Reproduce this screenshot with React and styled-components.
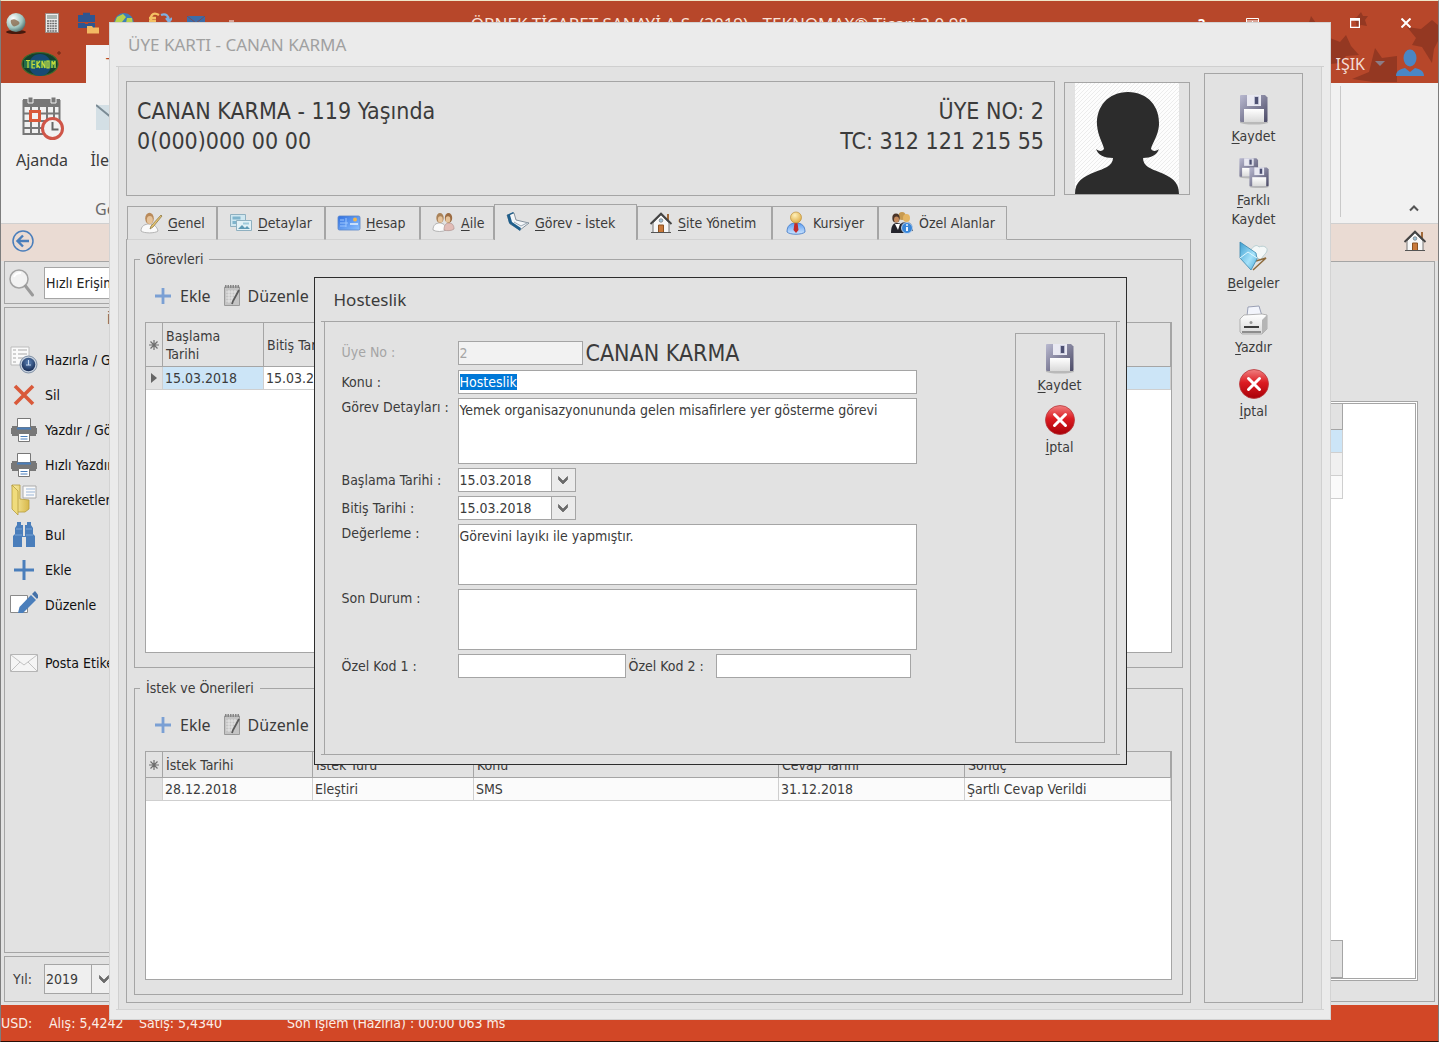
import React, { useEffect, useRef } from "react";
import styled, { createGlobalStyle } from "styled-components";

const ui = '"DejaVu Sans Condensed", "Noto Sans", sans-serif';
const titleFont = '"Noto Sans", "Open Sans", sans-serif';
const line = "#a5a5a5";
const face = "#e2e2e2";
const ink = "#3b3b3b";
const accent = "#b7472a";
const blue = "#4a7ebb";

const Global = createGlobalStyle`
  *, *::before, *::after { box-sizing: border-box; }
  body { margin: 0; font-family: ${ui}; font-size: 14px; color: ${ink}; }
  button, input, textarea, select { font-family: inherit; font-size: inherit; color: inherit; }
  svg { display: block; flex: none; }
`;

/* ---------- shared icons ---------- */

const Svg = ({ s = 24, w, h, vb, children, ...rest }) => (
  <svg width={w || s} height={h || s} viewBox={vb || `0 0 ${w || s} ${h || s}`} fill="none" aria-hidden="true" {...rest}>
    {children}
  </svg>
);

const HiddenDefs = styled.svg`position: absolute;`;

const Defs = () => (
  <HiddenDefs width="0" height="0" aria-hidden="true">
    <defs>
      <linearGradient id="disk" x1="0" y1="0" x2="1" y2="1">
        <stop offset="0" stopColor="#b9b9d0" />
        <stop offset="1" stopColor="#4b4a66" />
      </linearGradient>
      <linearGradient id="paper" x1="0" y1="0" x2="0" y2="1">
        <stop offset="0" stopColor="#ffffff" />
        <stop offset="1" stopColor="#d9d9d9" />
      </linearGradient>
      <linearGradient id="red" x1="0" y1="0" x2="0" y2="1">
        <stop offset="0" stopColor="#f08080" />
        <stop offset="0.45" stopColor="#dc1c22" />
        <stop offset="1" stopColor="#a80008" />
      </linearGradient>
      <linearGradient id="sky" x1="0" y1="0" x2="1" y2="1">
        <stop offset="0" stopColor="#3f9fd0" />
        <stop offset="0.6" stopColor="#a5e2fa" />
        <stop offset="1" stopColor="#4aa8d6" />
      </linearGradient>
      <linearGradient id="card" x1="0" y1="0" x2="1" y2="1">
        <stop offset="0" stopColor="#2f6fe0" />
        <stop offset="1" stopColor="#8fc3ff" />
      </linearGradient>
      <linearGradient id="gold" x1="0" y1="0" x2="1" y2="0">
        <stop offset="0" stopColor="#fbf0a8" />
        <stop offset="1" stopColor="#d8b84a" />
      </linearGradient>
      <radialGradient id="skin" cx="0.4" cy="0.3" r="0.8">
        <stop offset="0" stopColor="#fff0b8" />
        <stop offset="1" stopColor="#dba53a" />
      </radialGradient>
      <linearGradient id="bluebody" x1="0" y1="0" x2="0" y2="1">
        <stop offset="0" stopColor="#5a9cf0" />
        <stop offset="1" stopColor="#cfe6ff" />
      </linearGradient>
      <radialGradient id="orb" cx="0.35" cy="0.3" r="0.8">
        <stop offset="0" stopColor="#ffffff" />
        <stop offset="0.6" stopColor="#9fc4bd" />
        <stop offset="1" stopColor="#3c5a58" />
      </radialGradient>
      <radialGradient id="dial" cx="0.5" cy="0.35" r="0.7">
        <stop offset="0" stopColor="#5b83b8" />
        <stop offset="1" stopColor="#10234a" />
      </radialGradient>
      <pattern id="hatch" width="4" height="4" patternUnits="userSpaceOnUse">
        <rect width="4" height="4" fill="#fdfdfd" />
        <path d="M-1 5L5 -1M-1 1L1 -1M3 5L5 3" stroke="#ececec" strokeWidth="1" />
      </pattern>
    </defs>
  </HiddenDefs>
);

const DiskShape = () => (
  <>
    <ellipse cx="16" cy="29.500" rx="14" ry="2" fill="#000" opacity="0.18" />
    <path d="M3 2h24l2.500 2.500V28a1 1 0 0 1-1 1H3a1 1 0 0 1-1-1V3a1 1 0 0 1 1-1z" fill="url(#disk)" />
    <path d="M9 2h14v11H9z" fill="#e9e9f2" />
    <path d="M16 3.500h5v8h-5z" fill="#b7b9ce" />
    <path d="M17 4h3v7h-3z" fill="#4d5072" />
    <path d="M6 16h20v13H6z" fill="url(#paper)" />
  </>
);
const Disk = () => <Svg s={32}><DiskShape /></Svg>;
const Disks = () => (
  <Svg s={32}>
    <g transform="scale(.68)"><DiskShape /></g>
    <g transform="translate(10 9) scale(.7)"><DiskShape /></g>
  </Svg>
);
const Cancel = () => (
  <Svg s={32}>
    <circle cx="16" cy="16" r="14.500" fill="url(#red)" stroke="#b8383c" strokeWidth=".8" />
    <path d="M10.500 10.500l11 11M21.500 10.500l-11 11" stroke="#fff" strokeWidth="3" strokeLinecap="round" />
  </Svg>
);
const Docs = () => (
  <Svg s={32}>
    <path d="M13 10c2-4 6-6 8-3 4-2 9 0 8 4-1 3-4 4-6 9L13 14z" fill="#f4f8f8" stroke="#b9cfd2" />
    <path d="M18 21l10-3-13 12" stroke="#8c6a3c" strokeWidth="1.500" />
    <path d="M2 2l16 11 1 6-6 11L2 18z" fill="url(#sky)" stroke="#3a87ad" strokeWidth=".8" />
    <path d="M2 18l8-6 9 6" stroke="#e2f7ff" />
  </Svg>
);
const Printer3D = () => (
  <Svg s={32}>
    <path d="M10 3l11-1 3 10H9z" fill="#f2f4fb" stroke="#9aa0b5" />
    <path d="M2 15l4-4 18-1 5 1v14l-5 5H4l-2-2z" fill="url(#paper)" stroke="#a2a2a2" strokeWidth=".8" />
    <path d="M24 16l5-5v14l-5 5z" fill="#b5b5b5" />
    <path d="M6 23h15" stroke="#3d3d3d" strokeWidth="2" />
    <path d="M4 27h19v2H4z" fill="#8d8d8d" />
    <circle cx="13" cy="18.500" r="1.500" fill="#9a9a9a" />
  </Svg>
);

const Plus = ({ s = 20, c = blue }) => (
  <Svg s={s} vb="0 0 20 20"><path d="M10 2v16M2 10h16" stroke={c} strokeWidth="2.800" /></Svg>
);
const Notepad = () => (
  <Svg w={18} h={24}>
    <path d="M1.500 3h15v18.500h-15z" fill="#c4c4c4" stroke="#9a9a9a" />
    <path d="M2 2.500h14" stroke="#858585" strokeWidth="3" strokeDasharray="1.500 1" />
    <path d="M3 8h11M3 11h11M3 14h9M3 17h8M6 6v13M9 6v13M12 6v7" stroke="#ececec" strokeWidth=".8" />
    <path d="M16 6l-6 11-1 3" stroke="#5b5b5b" strokeWidth="1.800" />
  </Svg>
);
const Chevron = () => (
  <Svg w={12} h={10}><path d="M1.500 1.500L6 6l4.500-4.500v3L6 9 1.500 4.500z" fill="#6a6a6a" stroke="#6a6a6a" strokeWidth=".8" /></Svg>
);
const House = () => (
  <Svg s={24}>
    <path d="M18 3h2v6h-2z" fill="#a26a3a" />
    <path d="M4 12l8-8 8 8v9.500H4z" fill="#f7f7f7" stroke="#777" />
    <path d="M1.500 13L12 2.500 22.500 13" stroke="#444" strokeWidth="1.800" />
    <path d="M9.500 14h5v7.500h-5z" fill="#c9793a" stroke="#8a5222" />
    <circle cx="12" cy="9.500" r="1.800" fill="#9fc3d8" stroke="#666" strokeWidth=".6" />
    <path d="M2 21.500h20" stroke="#555" />
  </Svg>
);

/* ---------- tab icons ---------- */

const Person = () => (
  <Svg s={24}>
    <path d="M2 20c0-5 4-7 8-7s8 2 9 7c-3 2.500-14 2.500-17 0z" fill="#fafafa" stroke="#a5a5a5" strokeWidth=".8" />
    <ellipse cx="10.500" cy="7.500" rx="4.300" ry="5.800" fill="#b98a5a" />
    <ellipse cx="10.800" cy="9" rx="3" ry="4" fill="#e6c39a" />
    <path d="M22 4L12 15l-1 3 3-2 9-11z" fill="#e9c56e" stroke="#8d7a4a" strokeWidth=".8" />
  </Svg>
);
const Screens = () => (
  <Svg s={24}>
    <path d="M1.500 3.500h15v12h-15z" fill="#cfe7f0" stroke="#8fb0c0" />
    <path d="M3.500 5.500h8v3h-8zM3.500 10h5v3h-5z" fill="#7fb4cc" />
    <path d="M7.500 9.500h15v10h-15z" fill="#e2f1f6" stroke="#8fb0c0" />
    <path d="M9 18l4-4 3 3 2-2 3 3z" fill="#5e9ab5" />
    <path d="M14 11.500h6v2h-6z" fill="#9fcadb" />
  </Svg>
);
const Card = () => (
  <Svg s={24}>
    <rect x="1" y="5" width="22" height="14" rx="1.500" fill="url(#card)" stroke="#5c87c8" strokeWidth=".8" />
    <path d="M3 9h4M3 12h8M3 15h6M9 7v9" stroke="#9cc6ff" />
    <circle cx="18" cy="8.500" r="2" fill="#f3b64a" />
    <path d="M13 13h8" stroke="#e6f2ff" strokeWidth="1.500" />
  </Svg>
);
const Family = () => (
  <Svg s={24}>
    <path d="M1 19c0-5 3-7 6.500-7S14 14 14 19c-3 2-10 2-13 0z" fill="#fafafa" stroke="#a5a5a5" strokeWidth=".8" />
    <path d="M12 19c0-5 2-7 5-7s5 2 5 6c-2 2-8 2-10 1z" fill="#e2bcb6" stroke="#b59a98" strokeWidth=".8" />
    <ellipse cx="8" cy="7" rx="3.700" ry="5" fill="#a98258" />
    <ellipse cx="8.300" cy="8.400" rx="2.400" ry="3.200" fill="#e6c39a" />
    <ellipse cx="16.500" cy="7" rx="3.700" ry="5" fill="#9c6c42" />
    <ellipse cx="16" cy="8.400" rx="2.300" ry="3.200" fill="#e6c39a" />
  </Svg>
);
const Book = () => (
  <Svg s={24}>
    <path d="M1 4l7-2 2 7 13 3-9 7L4 13z" fill="#f4f6f8" stroke="#6a7a88" strokeWidth=".8" />
    <path d="M1 4l2 8 11 8 1-3-9-6-2-7 4-2-1-1z" fill="#1f5f8c" />
    <path d="M8 11l7 4 6-3" stroke="#9aa8b4" />
  </Svg>
);
const Trainee = () => (
  <Svg s={24}>
    <path d="M3 21c0-6 3-9 9-9s9 3 9 9c-3 3-15 3-18 0z" fill="url(#bluebody)" stroke="#3a74c4" strokeWidth=".8" />
    <path d="M10.500 12h3l1 7-2.500 3-2.500-3z" fill="#c22a2a" />
    <circle cx="12" cy="6.500" r="5.500" fill="url(#skin)" stroke="#b5862d" strokeWidth=".6" />
  </Svg>
);
const Crowd = () => (
  <Svg s={24}>
    <ellipse cx="12" cy="5" rx="3.600" ry="4" fill="#c79a50" />
    <ellipse cx="16.500" cy="7" rx="3.500" ry="4" fill="#e5b562" />
    <path d="M8 21c0-7 3-10 8-10s7 3 7 9z" fill="#3c4458" />
    <ellipse cx="6" cy="7" rx="3.700" ry="4.500" fill="#4a3428" />
    <ellipse cx="6.500" cy="8.500" rx="2.500" ry="3" fill="#c48a5c" />
    <path d="M1 22c0-7 2-10 6-10s7 3 8 10z" fill="#23232b" />
    <path d="M5 13l3 6 2-6z" fill="#fff" />
    <circle cx="17" cy="17" r="5.500" fill="#3a86d8" stroke="#d8e9fb" strokeWidth=".8" />
    <path d="M17 16v4M17 13.200v1.600" stroke="#fff" strokeWidth="1.800" />
  </Svg>
);

/* ---------- sidebar icons ---------- */

const Magnifier = () => (
  <Svg s={28}>
    <circle cx="11" cy="10" r="9" fill="#f2f2f2" stroke="#a3a3a3" strokeWidth="1.500" />
    <path d="M17.500 17l7 9" stroke="#9a9a9a" strokeWidth="3" strokeLinecap="round" />
    <path d="M6 8c1-3 4-4 7-4" stroke="#fff" strokeWidth="2" />
  </Svg>
);
const Prepare = () => (
  <Svg s={28}>
    <path d="M1 1h18v18H1z" fill="#fafafa" stroke="#bcbcbc" />
    <path d="M3 4h3M8 4h9M3 8h3M8 8h9M3 12h3M8 12h5M3 16h3" stroke="#a8a8a8" />
    <circle cx="18.500" cy="18.500" r="8.500" fill="#c5d0de" stroke="#8090a5" />
    <circle cx="18.500" cy="18.500" r="6.800" fill="url(#dial)" />
    <path d="M18.500 14v5M16 19h5" stroke="#c5d8f0" />
  </Svg>
);
const Cross = () => (
  <Svg s={28}><path d="M5 5l18 18M23 5L5 23" stroke="#d9593a" strokeWidth="3.600" /></Svg>
);
const Printer = () => (
  <Svg s={28}>
    <path d="M2 10h24v10H2z" fill="#787878" />
    <path d="M1 12h26v6H1z" fill="#787878" />
    <path d="M7.500 2.500h13v9h-13z" fill="#fff" stroke="#777" />
    <path d="M7 12.500h14" stroke={blue} strokeWidth="2" />
    <path d="M8.500 17.500h11v8h-11z" fill="#fff" stroke="#777" />
    <path d="M10.500 20.500h7M10.500 23h7" stroke={blue} />
  </Svg>
);
const Folder = () => (
  <Svg w={28} h={32}>
    <path d="M13 2h13v12H13z" fill="#fafafa" stroke="#aaa" />
    <path d="M16 5h9M16 8h9M16 11h8" stroke="#9bb6d6" />
    <path d="M2 1h8v14l9 1v9l-4 3H7z" fill="url(#gold)" stroke="#b59c3e" strokeWidth=".8" />
    <path d="M2 1l6 6v24l-6-6z" fill="#f0dc7c" stroke="#b59c3e" strokeWidth=".8" />
  </Svg>
);
const Binoculars = () => (
  <Svg s={28}>
    <path d="M7 1h4v3h2v11h2V4h2V1h4v3l2 3v6l2 2v11h-9V16h-4v10H3V15l2-2V7l2-3z" fill={blue} />
    <path d="M5 14h7M16 14h7M6 8h6M16 8h6" stroke="#76a3d6" />
  </Svg>
);
const SidePlus = () => (
  <Svg s={28}><path d="M14 4v20M4 14h20" stroke={blue} strokeWidth="3" /></Svg>
);
const Edit = () => (
  <Svg s={28}>
    <path d="M.5 4.500h17v17H.5z" fill="#fff" stroke="#8a8a8a" />
    <path d="M8 22l1.500-6L21 4l5 5-13 13z" fill={blue} />
    <path d="M22 3l3-3 4 5-2 3z" fill="#4471a8" />
  </Svg>
);
const Envelope = () => (
  <Svg w={28} h={20}>
    <path d="M.5 1.500h27v17H.5z" fill="#f5f5f5" stroke="#b5b5b5" />
    <path d="M1 2l13 10L27 2M1 18l9-9M27 18l-9-9" stroke="#c2c2c2" />
  </Svg>
);

/* ---------- main window ---------- */

const Window = styled.div`
  position: relative;
  min-height: 100vh;
  display: flex;
  flex-direction: column;
  border: 1px solid #7d7d7d;
  border-top-color: #efe6c8;
  border-bottom-color: #2a0d05;
  background: ${face};
  overflow: hidden;
`;
const TopArea = styled.header`
  position: relative;
  background: ${accent};
  color: #fff;
  font-family: ${titleFont};
`;
const Stars = styled.svg`
  position: absolute;
  right: 0;
  top: 0;
`;
const TitleBar = styled.div`
  position: relative;
  height: 44px;
  display: grid;
  grid-template-columns: 1fr auto 1fr;
  align-items: center;
`;
const Quick = styled.div`
  display: flex;
  margin-left: -3px;
`;
const QuickButton = styled.button`
  width: 36px;
  height: 44px;
  padding: 0;
  border: 0;
  background: none;
  display: grid;
  place-items: center;
  color: #fff;
`;
const Caption = styled.h1`
  margin: 0;
  font-size: 17px;
  font-weight: 400;
  color: #fbe3da;
`;
const WindowButtons = styled.div`
  display: flex;
  justify-content: flex-end;
  padding-right: 7px;
`;
const WindowButton = styled(QuickButton)`width: 51px;`;
const TabRow = styled.div`
  position: relative;
  height: 38px;
  display: flex;
  justify-content: space-between;
`;
const LogoButton = styled.button`
  width: 85px;
  padding: 0 6px 0 0;
  border: 0;
  background: none;
  display: grid;
  place-items: center;
`;
const RibbonTab = styled.button`
  padding: 0 20px;
  border: 0;
  background: #f1f1f1;
  color: ${accent};
  font-size: 16px;
`;
const RowStart = styled.div`display: flex;`;
const UserButton = styled.button`
  display: flex;
  align-items: center;
  gap: 10px;
  padding: 0 13px 0 0;
  border: 0;
  background: none;
  color: #f4ded6;
  font-size: 16px;
`;
const Ribbon = styled.div`
  height: 141px;
  display: flex;
  justify-content: space-between;
  background: #f1f1f1;
  border-bottom: 1px solid #d0d0d0;
  font-family: ${titleFont};
`;
const RibbonGroup = styled.div`
  flex: 1;
  margin: 3px 0 6px;
  display: grid;
  grid-template-rows: 1fr 16px;
  border-right: 1px solid #c9c9c9;
`;
const RibbonItems = styled.div`
  display: flex;
  gap: 4px;
  padding: 10px 0 0 5px;
`;
const RibbonButton = styled.button`
  width: 72px;
  padding: 0;
  border: 0;
  background: none;
  display: flex;
  flex-direction: column;
  align-items: center;
  gap: 8px;
  font-size: 16px;
  line-height: 24px;
`;
const GroupName = styled.div`
  padding-left: 94px;
  color: #6b6b6b;
  font-size: 16px;
  line-height: 16px;
`;
const RibbonEnd = styled.div`
  width: 97px;
  display: flex;
  align-items: flex-end;
  justify-content: flex-end;
  padding: 0 19px 10px;
`;
const BareButton = styled.button`border: 0; padding: 0; background: none;`;
const Crumbs = styled.div`
  height: 37px;
  display: flex;
  align-items: center;
  justify-content: space-between;
  padding: 0 11px 3px 11px;
  background: #eadbd3;
`;
const Work = styled.div`
  flex: 1;
  display: grid;
  grid-template-columns: 220px 1fr;
  gap: 3px;
  padding: 0 3px 3px;
`;
const Side = styled.nav`
  display: flex;
  flex-direction: column;
  gap: 3px;
`;
const Panel = styled.div`border: 1px solid ${line};`;
const SearchPanel = styled(Panel)`
  height: 43px;
  display: flex;
  align-items: center;
  gap: 8px;
  padding: 0 3px;
`;
const SearchBox = styled.input`
  flex: 1;
  min-width: 0;
  height: 32px;
  border: 1px solid ${line};
  padding: 0 1px;
  background: #fff;
  color: #222;
`;
const NavPanel = styled(Panel)`
  flex: 1;
  color: #111;
`;
const NavTitle = styled.div`
  height: 34px;
  padding: 3px 0 0 102px;
  color: #555;
`;
const NavItem = styled.button`
  width: 100%;
  height: 35px;
  margin-top: ${(p) => (p.$apart ? 23 : 0)}px;
  display: flex;
  align-items: center;
  gap: 7px;
  padding: 0 5px;
  border: 0;
  background: none;
  white-space: nowrap;
`;
const YearPanel = styled(Panel)`
  height: 46px;
  display: flex;
  align-items: center;
  padding: 0 8px;
`;
const YearLabel = styled.label`width: 31px;`;
const Picker = styled.span`
  width: ${(p) => p.$w}px;
  height: ${(p) => p.$h}px;
  display: inline-grid;
  grid-template-columns: 1fr 24px;
  border: 1px solid ${line};
  background: ${(p) => p.$bg || "#fff"};
`;
const YearSelect = styled.select`
  grid-area: 1 / 1 / 2 / 3;
  appearance: none;
  border: 0;
  padding: 0 1px;
  background: none;
`;
const YearArrow = styled.span`
  grid-area: 1 / 2;
  display: grid;
  place-items: center;
  border-left: 1px solid ${line};
  pointer-events: none;
`;
const MainPanel = styled(Panel)`
  display: flex;
  padding: 139px 16px 20px;
`;
const ListFrame = styled.div`
  flex: 1;
  display: flex;
  flex-direction: column;
  justify-content: space-between;
  padding-right: 72px;
  border: 3px double ${line};
  background: #fff;
`;
const ListRow = styled.div`
  height: ${(p) => p.$h || 23}px;
  background: ${(p) => p.$bg};
  border: solid ${(p) => (p.$dark ? line : "#cfcfcf")};
  border-width: ${(p) => (p.$footer ? "1px" : "0 1px 1px 0")};
`;
const StatusBar = styled.footer`
  height: 36px;
  display: flex;
  align-items: center;
  background: #d24726;
  color: #fbeee6;
  white-space: pre;
`;
const Status = styled.span`width: ${(p) => p.$w}px;`;

/* ---------- member card window ---------- */

const CardWindow = styled.section`
  position: absolute;
  inset: 21px 107px 21px 108px;
  display: flex;
  flex-direction: column;
  border: 1px solid #d3d3d3;
  background: #ebebeb;
`;
const CardTitle = styled.h2`
  margin: 0 6px;
  height: 44px;
  padding-left: 12px;
  border-bottom: 1px solid #cfcfcf;
  color: #a0a0a0;
  font-family: ${titleFont};
  font-size: 17px;
  line-height: 44px;
  font-weight: 400;
`;
const CardBody = styled.div`
  flex: 1;
  margin: 0 8px;
  display: grid;
  grid-template-columns: 1fr 99px;
  gap: 13px;
  padding: 6px 18px 6px 7px;
  border: solid #d0d0d0;
  border-width: 0 1px;
  background: ${face};
`;
const CardFoot = styled.div`
  height: 10px;
  margin: 0 6px;
  border-top: 1px solid #d3d3d3;
`;
const CardMain = styled.div`
  padding-top: 8px;
  display: flex;
  flex-direction: column;
`;
const Summary = styled.div`
  display: grid;
  grid-template-columns: 1fr 126px;
  gap: 9px;
  align-items: center;
  margin-bottom: 8px;
  padding-right: 1px;
`;
const SummaryBox = styled(Panel)`
  height: 115px;
  padding: 14px 10px;
  display: flex;
  justify-content: space-between;
  font-size: 23px;
  line-height: 30px;
`;
const SummaryCol = styled.div`text-align: ${(p) => (p.$end ? "right" : "left")};`;
const Photo = styled(Panel)`
  display: grid;
  place-items: center;
`;
const Tabs = styled.div`
  position: relative;
  z-index: 1;
  height: 36px;
  margin: 0 0 -1px 1px;
  display: flex;
  align-items: flex-end;
`;
const Tab = styled.button`
  width: ${(p) => p.$w}px;
  height: ${(p) => (p.$on ? 36 : 34)}px;
  display: flex;
  align-items: center;
  gap: 5px;
  padding: 0 0 0 11px;
  border: 1px solid ${line};
  border-bottom: ${(p) => (p.$on ? "0" : "1px solid #d2d2d2")};
  background: ${face};
  white-space: nowrap;
  u { text-underline-offset: 2px; }
`;
const TabPage = styled(Panel)`
  flex: 1;
  display: flex;
  flex-direction: column;
  gap: 9px;
  padding: 8px 7px 7px;
`;
const Group = styled.fieldset`
  flex: 1 1 ${(p) => p.$basis}px;
  min-width: 0;
  margin: 0;
  padding: 0 10px 14px;
  border: 1px solid ${line};
  display: flex;
  flex-direction: column;
`;
const Legend = styled.legend`
  margin-left: -5px;
  padding: 0 6px;
  line-height: 22px;
`;
const Tools = styled.div`
  height: 52px;
  display: flex;
  align-items: center;
  gap: 12px;
  padding-left: 8px;
`;
const Tool = styled.button`
  display: flex;
  align-items: center;
  gap: 7px;
  padding: 0;
  border: 0;
  background: none;
  font-family: ${titleFont};
  font-size: 16px;
`;
const GridFrame = styled.div`
  flex: 1;
  border: 1px solid ${line};
  background: #fff;
`;
const Grid = styled.table`
  width: 100%;
  table-layout: fixed;
  border-collapse: separate;
  border-spacing: 0;
`;
const Col = styled.col`width: ${(p) => (p.$w ? p.$w + "px" : "auto")};`;
const Th = styled.th`
  height: ${(p) => p.$h}px;
  padding: 0 3px;
  border: solid ${line};
  border-width: 0 1px 1px 0;
  background: ${face};
  text-align: left;
  font-weight: 400;
  line-height: 18px;
  svg { margin: 0 auto; }
`;
const Td = styled.td`
  height: 23px;
  padding: 0 2px;
  border: solid #cfcfcf;
  border-width: 0 1px 1px 0;
  background: ${(p) => p.$bg || "#fbfbfb"};
  line-height: 20px;
  white-space: nowrap;
  svg { margin: 0 auto; }
`;

const Actions = styled(Panel)`
  display: flex;
  flex-direction: column;
  align-items: center;
  gap: ${(p) => p.$gap}px;
  padding-top: ${(p) => p.$top}px;
`;
const Action = styled.button`
  width: 64px;
  padding: 0;
  border: 0;
  background: none;
  display: flex;
  flex-direction: column;
  align-items: center;
  gap: 2px;
  line-height: 19px;
  text-align: center;
  u { text-underline-offset: 2px; }
`;
const Caption2 = styled.span`
  display: flex;
  flex-direction: column;
`;

/* ---------- task dialog ---------- */

const Dialog = styled.section`
  position: absolute;
  left: calc(50% - 406px);
  top: calc(50% - 244px);
  width: 813px;
  border: 1px solid #2d2d2d;
  background: ${face};
`;
const DialogTitle = styled.h2`
  height: 44px;
  margin: 0 6px;
  padding-left: 13px;
  border-bottom: 1px solid ${line};
  font-family: ${titleFont};
  font-size: 17px;
  line-height: 44px;
  font-weight: 400;
`;
const DialogBody = styled.div`
  margin: 0 9px;
  display: flex;
  justify-content: space-between;
  min-height: 432px;
  padding: 11px 11px 11px 17px;
  border: solid ${line};
  border-width: 0 1px;
`;
const DialogFoot = styled.div`
  height: 10px;
  margin: 0 6px;
  border-top: 1px solid ${line};
`;
const Form = styled.form`
  align-self: flex-start;
  padding-top: 7px;
  display: grid;
  grid-template-columns: 116px 459px;
  row-gap: 4px;
`;
const Label = styled.label`
  line-height: ${(p) => (p.$top ? 18 : 24)}px;
  color: ${(p) => (p.$off ? "#a5a5a5" : ink)};
  white-space: nowrap;
`;
const Line = styled.div`
  display: flex;
  align-items: center;
  gap: 3px;
  height: ${(p) => p.$h || 24}px;
`;
const Box = styled.input`
  width: ${(p) => (p.$w ? p.$w + "px" : "100%")};
  height: 24px;
  padding: 0 1px;
  border: 1px solid ${line};
  border-radius: 0;
  background: #fff;
  outline: 0;
  &:disabled { background: #f2f2f2; color: #a5a5a5; }
  &::selection { background: #0078d7; color: #fff; }
`;
const Memo = styled.textarea`
  height: ${(p) => p.$h}px;
  padding: 1px;
  border: 1px solid ${line};
  border-radius: 0;
  background: #fff;
  line-height: 20px;
  resize: none;
  outline: 0;
`;
const DateBox = styled.input`
  min-width: 0;
  border: 0;
  padding: 0 1px;
  background: none;
  outline: 0;
`;
const DropButton = styled.button`
  padding: 0;
  border: 0;
  border-left: 1px solid ${line};
  background: #ebebeb;
  display: grid;
  place-items: center;
`;
const MemberName = styled.strong`
  font-size: 23px;
  line-height: 26px;
  font-weight: 400;
`;
const SecondLabel = styled(Label)`width: 84px;`;
const NarrowActions = styled(Actions)`width: 90px;`;

const Key = ({ t }) => (
  <span>
    <u>{t[0]}</u>
    {t.slice(1)}
  </span>
);

const Asterisk = () => (
  <Svg s={10}><path d="M5 0v10M0 5h10M1.500 1.500l7 7M8.500 1.500l-7 7" stroke="#6e6e6e" strokeWidth="1.200" /></Svg>
);
const RowMark = () => (
  <Svg w={6} h={10}><path d="M0 0l6 5-6 5z" fill="#666" /></Svg>
);

const tabs = [
  ["Genel", 90, Person, true],
  ["Detaylar", 108, Screens, true],
  ["Hesap", 95, Card, true],
  ["Aile", 74, Family, true],
  ["Görev - İstek", 143, Book, true, true],
  ["Site Yönetim", 135, House, true],
  ["Kursiyer", 106, Trainee],
  ["Özel Alanlar", 129, Crowd],
];

const nav = [
  ["Hazırla / Göster", Prepare],
  ["Sil", Cross],
  ["Yazdır / Göster", Printer],
  ["Hızlı Yazdır", Printer],
  ["Hareketler", Folder],
  ["Bul", Binoculars],
  ["Ekle", SidePlus],
  ["Düzenle", Edit],
  ["Posta Etiketi", Envelope, true],
];

const GroupTools = () => (
  <Tools>
    <Tool type="button"><Plus c="#7ba0d4" /> Ekle</Tool>
    <Tool type="button"><Notepad /> Düzenle</Tool>
  </Tools>
);

const DateField = ({ id, value }) => (
  <Picker $w={118} $h={24}>
    <DateBox id={id} defaultValue={value} />
    <DropButton type="button" aria-label="Takvim"><Chevron /></DropButton>
  </Picker>
);

const MainWindow = () => (
  <>
    <TopArea>
      <Stars width="170" height="82" viewBox="0 0 170 82" aria-hidden="true">
        <g fill="#943822">
          <path d="M93 11l2 4h5l-3 4 2 6-6-1-4 3-1-6-4-3 5-2z" />
          <path d="M164 19l-11 9-14-2 9 11-4 7 10 2 10 16 2-14 4-8V24z" />
          <path d="M78 34l-6 7-10-4v26l10-1 6-7 13-1-8-9z" />
          <path d="M107 47l7 10 15-2v26h-24l-21-3 17-7z" />
          <path d="M43 15l5 7 4 3H40z" />
        </g>
      </Stars>
      <TitleBar>
        <Quick>
          <QuickButton aria-label="Başlangıç">
            <Svg s={22}><ellipse cx="11" cy="20" rx="10" ry="2" fill="#46190d" /><circle cx="11" cy="10.500" r="9.500" fill="url(#orb)" /><path d="M6 8c4-2 5 0 7 1s2 3 0 4-4 2-5 1-3-4-2-6z" fill="#8a6a4c" opacity=".8" /></Svg>
          </QuickButton>
          <QuickButton aria-label="Hesap makinesi">
            <Svg w={14} h={20}><path d="M.5.5h13v19H.5z" fill="#ededed" stroke="#9b8c86" /><path d="M2 2h10v4H2z" fill="#a9b4b0" /><path d="M2 8h10M2 10.500h10M2 13h10M2 15.500h10M2 18h10" stroke="#6b6b6b" strokeWidth="1.500" strokeDasharray="2 .6" /></Svg>
          </QuickButton>
          <QuickButton aria-label="Kasa">
            <Svg w={22} h={22}><path d="M6 3V.8h7V3h5v7H1V3z" fill="#2f5590" /><path d="M1 11h7v1h3v-1h7v5H1z" fill="#2f5590" /><path d="M10 14h5l1 1.500h6V21.500H10z" fill="#f3b963" /></Svg>
          </QuickButton>
          <QuickButton aria-label="Web">
            <Svg s={22}><circle cx="11" cy="11" r="10" fill="#3d7fb8" /><path d="M4 5l6-3 3 3-4 5-4 2-3-2zM14 6l5 0 1 6-4 3-3-4z" fill="#b9d24c" /></Svg>
          </QuickButton>
          <QuickButton aria-label="Döviz">
            <Svg w={24} h={22}><path d="M11 3C4-1 2 5 3 9M11 13C6 15 3 13 3 7M1 6h7M1 9h7" stroke="#f3c063" strokeWidth="2.400" /><path d="M13 3c5-2 8 1 8 6m-3-3l3 4 3-4" stroke="#7fb0e0" strokeWidth="2.200" /></Svg>
          </QuickButton>
          <QuickButton aria-label="Posta">
            <Svg w={18} h={14}><path d="M0 0h18v14H0z" fill="#3c6ca8" /><path d="M0 0l9 7 9-7" stroke="#7a4a58" /></Svg>
          </QuickButton>
          <QuickButton aria-label="Özelleştir">
            <Svg w={8} h={8}><path d="M1 2h5" stroke="#fff" /><path d="M1 5h5l-2.500 3z" fill="#fff" /></Svg>
          </QuickButton>
        </Quick>
        <Caption>ÖRNEK TİCARET SANAYİ A.Ş. (2019) - TEKNOMAX® Ticari 3.0.98</Caption>
        <WindowButtons>
          <WindowButton aria-label="Yardım"><b>?</b></WindowButton>
          <WindowButton aria-label="Şerit"><Svg w={13} h={10}><path d="M.5.500h12v9H.5zM0 3h13M6.500 3v6" stroke="#fff" /></Svg></WindowButton>
          <WindowButton aria-label="Küçült"><Svg w={10} h={10}><path d="M0 9h10" stroke="#fff" /></Svg></WindowButton>
          <WindowButton aria-label="Büyüt"><Svg w={10} h={10}><path d="M.5.500h9v9H.5zM0 2h10" stroke="#fff" strokeWidth="1.400" /></Svg></WindowButton>
          <WindowButton aria-label="Kapat"><Svg w={10} h={10}><path d="M.5.500l9 9M9.500.500l-9 9" stroke="#fff" strokeWidth="2" /></Svg></WindowButton>
        </WindowButtons>
      </TitleBar>
      <TabRow>
        <RowStart>
          <LogoButton aria-label="Teknomax">
            <Svg w={40} h={28}>
              <ellipse cx="19" cy="14" rx="18" ry="11.500" fill="#143f2c" stroke="#3a6a2e" strokeWidth="1.200" />
              <ellipse cx="19" cy="15" rx="11" ry="11" fill="#174a74" />
              <path d="M3 10h32v8H3z" fill="#2f8f5a" opacity=".6" />
              <path d="M5 10.500h4M7 11v7M14 11h-3v7h3M11 14.500h3M16 11v7M19 11l-3 3.500 3 3.500M21 18v-7l3 7v-7M27 11h-1v7h2v-7zM31 18v-7l1.500 3 1.500-3v7" stroke="#c6dc3c" strokeWidth="1.200" />
              <circle cx="38" cy="3" r="1.200" stroke="#571c0e" strokeWidth=".8" />
            </Svg>
          </LogoButton>
          <RibbonTab>Temel</RibbonTab>
        </RowStart>
        <UserButton>
          IŞIK
          <Svg w={10} h={6}><path d="M0 0h10L5 5z" fill="#8b7c86" /></Svg>
          <Svg s={30}><ellipse cx="15" cy="9" rx="6.500" ry="8.500" fill="#4a86c4" /><path d="M1 27c0-5 4-7 9-8l5 4 5-4c5 1 9 3 9 8z" fill="#4a86c4" /></Svg>
        </UserButton>
      </TabRow>
    </TopArea>
    <Ribbon>
      <RibbonGroup>
        <RibbonItems>
          <RibbonButton>
            <Svg s={44}>
              <path d="M3.500 5h36v33h-36zM3 17.500h37M3 25h37M3 32h37M11 11v27M19 11v27M27 11v27M34 11v20" stroke="#777" strokeWidth="2" />
              <path d="M3 3h37v8H3z" fill="#777" /><path d="M8 1h5v6H8zM31 1h5v6h-5z" fill="#777" stroke="#f1f1f1" />
              <path d="M10.500 15.500h9v9h-9z" fill="#f1f1f1" stroke="#d9593a" strokeWidth="3" />
              <circle cx="32.500" cy="32.500" r="10" fill="#f1f1f1" stroke="#cf5548" strokeWidth="3" />
              <path d="M32.500 26v7.500h6" stroke="#666" strokeWidth="2" />
            </Svg>
            Ajanda
          </RibbonButton>
          <RibbonButton>
            <Svg s={44}><path d="M0 9h44v25H0z" fill="#d3dfe5" /><path d="M0 9l22 18L44 9" stroke="#7a8a94" strokeWidth="2" /></Svg>
            İletişim
          </RibbonButton>
        </RibbonItems>
        <GroupName>Genel</GroupName>
      </RibbonGroup>
      <RibbonEnd>
        <BareButton aria-label="Şeridi daralt"><Svg w={10} h={10}><path d="M1 7.500l4-4 4 4" stroke="#555" strokeWidth="2" /></Svg></BareButton>
      </RibbonEnd>
    </Ribbon>
    <Crumbs>
      <BareButton aria-label="Geri"><Svg s={22}><circle cx="11" cy="11" r="10" stroke={blue} strokeWidth="1.500" /><path d="M17 11H6m5-5.500L5.500 11l5.500 5.500" stroke={blue} strokeWidth="2.400" /></Svg></BareButton>
      <BareButton aria-label="Ana sayfa"><House /></BareButton>
    </Crumbs>
    <Work>
      <Side>
        <SearchPanel>
          <Magnifier />
          <SearchBox aria-label="Hızlı Erişim" defaultValue="Hızlı Erişim" />
        </SearchPanel>
        <NavPanel>
          <NavTitle>İşlemler</NavTitle>
          {nav.map(([t, Icon, apart]) => (
            <NavItem key={t} $apart={apart}><Icon />{t}</NavItem>
          ))}
        </NavPanel>
        <YearPanel>
          <YearLabel htmlFor="year">Yıl:</YearLabel>
          <Picker $w={72} $h={30} $bg="#efefef">
            <YearSelect id="year" defaultValue="2019"><option>2019</option></YearSelect>
            <YearArrow><Chevron /></YearArrow>
          </Picker>
        </YearPanel>
      </Side>
      <MainPanel>
        <ListFrame>
          <div>
            <ListRow $h={26} $bg={face} $dark />
            <ListRow $bg="#cce5f7" />
            <ListRow $bg="#f0f0f0" />
            <ListRow $bg="#fafafa" />
          </div>
          <ListRow $h={38} $bg={face} $dark $footer />
        </ListFrame>
      </MainPanel>
    </Work>
    <StatusBar>
      <Status $w={48}>USD:</Status>
      <Status $w={90}>Alış: 5,4242</Status>
      <Status $w={148}>Satış: 5,4340</Status>
      <span>Son İşlem (Hazırla) : 00:00 063 ms</span>
    </StatusBar>
  </>
);

const MemberCard = () => (
  <CardWindow>
    <CardTitle>ÜYE KARTI - CANAN KARMA</CardTitle>
    <CardBody>
      <CardMain>
        <Summary>
          <SummaryBox>
            <SummaryCol>
              <div>CANAN KARMA - 119 Yaşında</div>
              <div>0(000)000 00 00</div>
            </SummaryCol>
            <SummaryCol $end>
              <div>ÜYE NO: 2</div>
              <div>TC: 312 121 215 55</div>
            </SummaryCol>
          </SummaryBox>
          <Photo>
            <Svg w={104} h={111}>
              <rect width="104" height="111" fill="url(#hatch)" />
              <path d="M53 9c20 0 32 15 31 33-1 12-7 18-8 24 2 3 6 2 8 0-2 6-8 9-16 9 0 8 8 11 16 14 12 5 20 9 20 22H0c0-13 8-17 20-22 8-3 18-6 18-14-9 0-15-3-17-9 2 2 6 3 8 0-1-6-6-12-7-24C21 24 33 9 53 9z" fill="#2c2c2c" />
            </Svg>
          </Photo>
        </Summary>
        <Tabs role="tablist">
          {tabs.map(([t, w, Icon, key, on]) => (
            <Tab key={t} type="button" role="tab" aria-selected={!!on} $w={w} $on={on}>
              <Icon />
              {key ? <Key t={t} /> : t}
            </Tab>
          ))}
        </Tabs>
        <TabPage>
          <Group $basis={420}>
            <Legend>Görevleri</Legend>
            <GroupTools />
            <GridFrame>
              <Grid>
                <colgroup><Col $w={17} /><Col $w={101} /><Col $w={101} /><Col /></colgroup>
                <thead>
                  <tr>
                    <Th $h={44}><Asterisk /></Th>
                    <Th>Başlama<br />Tarihi</Th>
                    <Th>Bitiş Tarihi</Th>
                    <Th />
                  </tr>
                </thead>
                <tbody>
                  <tr>
                    <Td $bg={face}><RowMark /></Td>
                    <Td $bg="#cce5f7">15.03.2018</Td>
                    <Td $bg="#fff">15.03.2018</Td>
                    <Td $bg="#cce5f7" />
                  </tr>
                </tbody>
              </Grid>
            </GridFrame>
          </Group>
          <Group $basis={318}>
            <Legend>İstek ve Önerileri</Legend>
            <GroupTools />
            <GridFrame>
              <Grid>
                <colgroup><Col $w={17} /><Col $w={150} /><Col $w={161} /><Col $w={305} /><Col $w={186} /><Col /></colgroup>
                <thead>
                  <tr>
                    <Th $h={26}><Asterisk /></Th>
                    <Th>İstek Tarihi</Th>
                    <Th>İstek Türü</Th>
                    <Th>Konu</Th>
                    <Th>Cevap Tarihi</Th>
                    <Th>Sonuç</Th>
                  </tr>
                </thead>
                <tbody>
                  <tr>
                    <Td $bg={face} />
                    <Td>28.12.2018</Td>
                    <Td>Eleştiri</Td>
                    <Td>SMS</Td>
                    <Td>31.12.2018</Td>
                    <Td>Şartlı Cevap Verildi</Td>
                  </tr>
                </tbody>
              </Grid>
            </GridFrame>
          </Group>
        </TabPage>
      </CardMain>
      <Actions $gap={11} $top={19}>
        <Action type="button"><Disk /><Key t="Kaydet" /></Action>
        <Action type="button">
          <Disks />
          <Caption2><Key t="Farklı" /><span>Kaydet</span></Caption2>
        </Action>
        <Action type="button"><Docs /><Key t="Belgeler" /></Action>
        <Action type="button"><Printer3D /><Key t="Yazdır" /></Action>
        <Action type="button"><Cancel /><Key t="İptal" /></Action>
      </Actions>
    </CardBody>
    <CardFoot />
  </CardWindow>
);

const TaskDialog = () => {
  const subject = useRef(null);
  useEffect(() => {
    subject.current.focus();
    subject.current.select();
  }, []);
  return (
    <Dialog role="dialog" aria-label="Hosteslik">
      <DialogTitle>Hosteslik</DialogTitle>
      <DialogBody>
        <Form>
          <Label htmlFor="no" $off>Üye No :</Label>
          <Line $h={26}>
            <Box id="no" $w={125} defaultValue="2" disabled />
            <MemberName>CANAN KARMA</MemberName>
          </Line>
          <Label htmlFor="subject">Konu :</Label>
          <Box id="subject" ref={subject} defaultValue="Hosteslik" />
          <Label htmlFor="details" $top>Görev Detayları :</Label>
          <Memo id="details" $h={66} defaultValue="Yemek organisazyonununda gelen misafirlere yer gösterme görevi" />
          <Label htmlFor="start">Başlama Tarihi :</Label>
          <DateField id="start" value="15.03.2018" />
          <Label htmlFor="end">Bitiş Tarihi :</Label>
          <DateField id="end" value="15.03.2018" />
          <Label htmlFor="review" $top>Değerleme :</Label>
          <Memo id="review" $h={61} defaultValue="Görevini layıkı ile yapmıştır." />
          <Label htmlFor="state" $top>Son Durum :</Label>
          <Memo id="state" $h={61} />
          <Label htmlFor="code1">Özel Kod 1 :</Label>
          <Line>
            <Box id="code1" $w={168} />
            <SecondLabel htmlFor="code2">Özel Kod 2 :</SecondLabel>
            <Box id="code2" $w={195} />
          </Line>
        </Form>
        <NarrowActions $gap={9} $top={8}>
          <Action type="button"><Disk /><Key t="Kaydet" /></Action>
          <Action type="button"><Cancel /><Key t="İptal" /></Action>
        </NarrowActions>
      </DialogBody>
      <DialogFoot />
    </Dialog>
  );
};

export default function App() {
  return (
    <>
      <Global />
      <Defs />
      <Window>
        <MainWindow />
        <MemberCard />
        <TaskDialog />
      </Window>
    </>
  );
}
